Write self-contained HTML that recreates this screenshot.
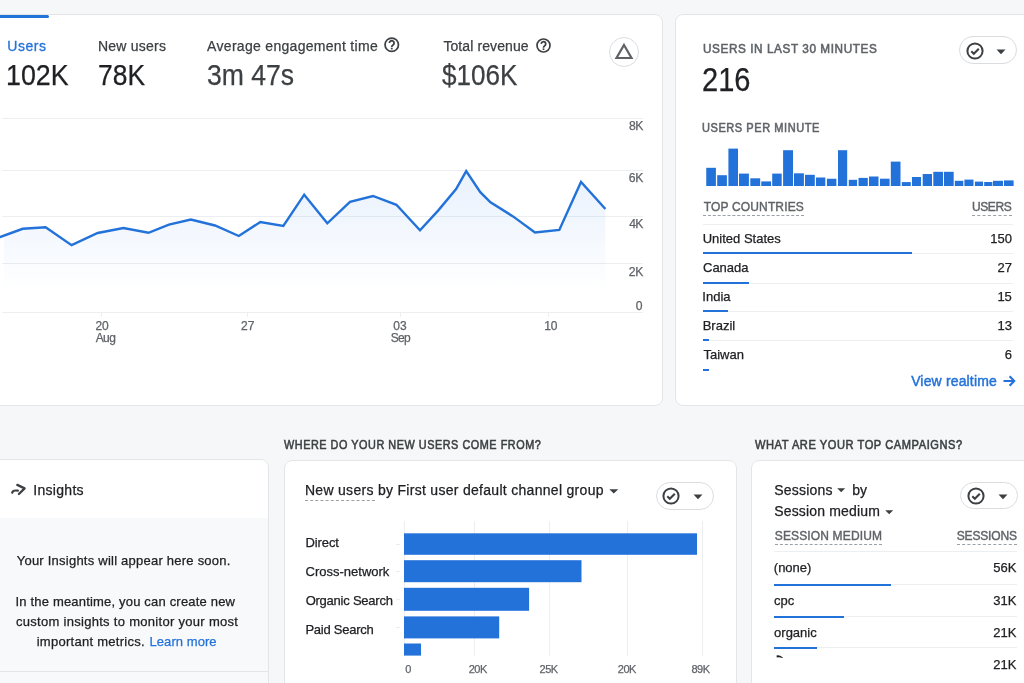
<!DOCTYPE html>
<html><head><meta charset="utf-8"><style>
html,body{margin:0;padding:0}
body{width:1024px;height:683px;overflow:hidden;position:relative;background:#f6f7f9;will-change:transform;font-family:"Liberation Sans",sans-serif}
.t{position:absolute;white-space:nowrap;-webkit-text-stroke-width:0.25px}
.r{position:absolute}
.card{position:absolute;background:#fff;border:1px solid #e3e5e8;border-radius:8px;box-sizing:border-box}
</style></head><body>
<div class="card" style="left:-20px;top:14px;width:683px;height:392px;"></div>
<div class="card" style="left:675px;top:14px;width:380px;height:392px;"></div>
<div class="card" style="left:-20px;top:459px;width:289px;height:260px;background:#f8f9fa;overflow:hidden"><div style="position:absolute;left:0;top:0;right:0;height:58px;background:#fff"></div><div style="position:absolute;left:0;top:211px;right:0;height:1px;background:#e3e5e8"></div></div>
<div class="card" style="left:283.5px;top:459.5px;width:453.2px;height:260px;"></div>
<div class="card" style="left:751px;top:459.5px;width:300px;height:260px;"></div>
<div class="r" style="left:0px;top:14.6px;width:49px;height:3.799999999999999px;background:#2372da;border-radius:0 1.5px 1.5px 0"></div>
<div class="t" id="t0" style="left:7.28px;top:37.60px;font-size:14px;line-height:16px;color:#2372da;letter-spacing:0.519px;-webkit-text-stroke:0.3px #2372da;">Users</div>
<div class="t" id="t1" style="left:6.08px;top:58.20px;font-size:29.5px;line-height:33px;color:#202124;transform:scaleX(0.9088);transform-origin:0 0;">102K</div>
<div class="t" id="t2" style="left:98.01px;top:38.00px;font-size:14px;line-height:16px;color:#3c4043;letter-spacing:0.224px;">New users</div>
<div class="t" id="t3" style="left:97.83px;top:58.00px;font-size:29.5px;line-height:33px;color:#202124;transform:scaleX(0.8955);transform-origin:0 0;">78K</div>
<div class="t" id="t4" style="left:207.11px;top:38.00px;font-size:14px;line-height:16px;color:#3c4043;letter-spacing:0.300px;">Average engagement time</div>
<div class="t" id="t5" style="left:207.16px;top:58.00px;font-size:29.5px;line-height:33px;color:#3c4043;transform:scaleX(0.9008);transform-origin:0 0;">3m 47s</div>
<div class="t" id="t6" style="left:443.38px;top:37.80px;font-size:14px;line-height:16px;color:#3c4043;letter-spacing:0.094px;">Total revenue</div>
<div class="t" id="t7" style="left:442.21px;top:57.80px;font-size:29.5px;line-height:33px;color:#3c4043;transform:scaleX(0.8838);transform-origin:0 0;">$106K</div>
<svg class="r" style="left:384.15px;top:37.15px" width="15.5" height="15.5" viewBox="0 0 24 24"><circle cx="12" cy="12" r="10.4" fill="none" stroke="#3c4043" stroke-width="2.7"/><path d="M8.4 9.4a3.6 3.6 0 1 1 5.6 3c-1.3 0.9-2 1.5-2 3.1" fill="none" stroke="#3c4043" stroke-width="2.8"/><rect x="10.6" y="16.6" width="2.8" height="2.6" fill="#3c4043"/></svg>
<svg class="r" style="left:536.2px;top:37.9px" width="15" height="15" viewBox="0 0 24 24"><circle cx="12" cy="12" r="10.4" fill="none" stroke="#3c4043" stroke-width="2.7"/><path d="M8.4 9.4a3.6 3.6 0 1 1 5.6 3c-1.3 0.9-2 1.5-2 3.1" fill="none" stroke="#3c4043" stroke-width="2.8"/><rect x="10.6" y="16.6" width="2.8" height="2.6" fill="#3c4043"/></svg>
<div class="r" style="left:609px;top:37px;width:28px;height:28px;border:1px solid #dadce0;border-radius:50%"></div>
<svg class="r" style="left:614px;top:42px" width="20" height="20" viewBox="0 0 20 20"><path d="M10 3 L17.5 16 L2.5 16 Z" fill="none" stroke="#5f6368" stroke-width="2.2" stroke-linejoin="miter"/></svg>
<div class="r" style="left:2px;top:118px;width:641px;height:1px;background:#eceef0;"></div>
<div class="r" style="left:2px;top:170px;width:641px;height:1px;background:#eceef0;"></div>
<div class="r" style="left:2px;top:216px;width:641px;height:1px;background:#eceef0;"></div>
<div class="r" style="left:2px;top:263px;width:641px;height:1px;background:#eceef0;"></div>
<div class="r" style="left:2px;top:312px;width:641px;height:1px;background:#eceef0;"></div>
<div class="t" id="t8" style="left:628.94px;top:119.30px;font-size:12.2px;line-height:14px;color:#5f6368;letter-spacing:-0.418px;">8K</div>
<div class="t" id="t9" style="left:628.85px;top:171.00px;font-size:12.2px;line-height:14px;color:#5f6368;letter-spacing:-0.438px;">6K</div>
<div class="t" id="t10" style="left:629.16px;top:217.10px;font-size:12.2px;line-height:14px;color:#5f6368;letter-spacing:-0.633px;">4K</div>
<div class="t" id="t11" style="left:628.86px;top:264.50px;font-size:12.2px;line-height:14px;color:#5f6368;letter-spacing:-0.334px;">2K</div>
<div class="t" id="t12" style="left:635.68px;top:299.20px;font-size:12.2px;line-height:14px;color:#5f6368;">0</div>
<div class="r" style="left:101px;top:313px;width:1px;height:4px;background:#eceef0;"></div>
<div class="r" style="left:247px;top:313px;width:1px;height:4px;background:#eceef0;"></div>
<div class="r" style="left:399.5px;top:313px;width:1.0px;height:4px;background:#eceef0;"></div>
<div class="r" style="left:547.5px;top:313px;width:1.0px;height:4px;background:#eceef0;"></div>
<div class="t" id="t13" style="left:95.41px;top:318.90px;font-size:12px;line-height:14px;color:#5f6368;">20</div>
<div class="t" id="t14" style="left:95.73px;top:330.60px;font-size:12px;line-height:14px;color:#5f6368;letter-spacing:-0.621px;">Aug</div>
<div class="t" id="t15" style="left:241.08px;top:318.70px;font-size:12px;line-height:14px;color:#5f6368;">27</div>
<div class="t" id="t16" style="left:393.36px;top:318.70px;font-size:12px;line-height:14px;color:#5f6368;">03</div>
<div class="t" id="t17" style="left:390.71px;top:330.60px;font-size:12px;line-height:14px;color:#5f6368;letter-spacing:-0.732px;">Sep</div>
<div class="t" id="t18" style="left:544.15px;top:318.70px;font-size:12px;line-height:14px;color:#5f6368;">10</div>
<svg class="r" style="left:0;top:0" width="663" height="406">
<defs><linearGradient id="g1" gradientUnits="userSpaceOnUse" x1="0" y1="190" x2="0" y2="292">
<stop offset="0" stop-color="#1a73e8" stop-opacity="0.085"/><stop offset="1" stop-color="#1a73e8" stop-opacity="0.0"/></linearGradient></defs>
<polygon points="4.0,233.6 4.0,233.6 22.7,228.8 45.6,227.2 71.6,245.2 97.7,233.0 123.4,228.0 148.5,232.8 168.9,224.7 190.8,219.5 215.0,225.5 238.8,236.0 260.3,222.0 283.3,226.0 304.2,194.7 327.3,223.3 350.0,201.9 373.0,196.0 396.4,204.8 420.0,230.3 438.1,210.6 456.1,189.0 466.2,171.1 480.3,192.2 490.5,202.3 513.0,216.4 535.0,232.5 559.3,230.0 581.0,182.0 605.4,209.0 605.4,312 4,312" fill="url(#g1)"/>
<polyline points="-10.0,241.0 0.0,237.0 22.7,228.8 45.6,227.2 71.6,245.2 97.7,233.0 123.4,228.0 148.5,232.8 168.9,224.7 190.8,219.5 215.0,225.5 238.8,236.0 260.3,222.0 283.3,226.0 304.2,194.7 327.3,223.3 350.0,201.9 373.0,196.0 396.4,204.8 420.0,230.3 438.1,210.6 456.1,189.0 466.2,171.1 480.3,192.2 490.5,202.3 513.0,216.4 535.0,232.5 559.3,230.0 581.0,182.0 605.4,209.0" fill="none" stroke="#2372da" stroke-width="2.4" stroke-linejoin="miter"/>
</svg>
<div class="t" id="t19" style="left:702.53px;top:42.00px;font-size:12.2px;line-height:14px;color:#5f6368;transform:scaleX(0.9641);transform-origin:0 0;letter-spacing:0.600px;-webkit-text-stroke:0.55px #5f6368;">USERS IN LAST 30 MINUTES</div>
<div class="t" id="t20" style="left:701.95px;top:59.80px;font-size:34px;line-height:38px;color:#202124;transform:scaleX(0.8541);transform-origin:0 0;">216</div>
<div class="t" id="t21" style="left:702.23px;top:121.00px;font-size:12.2px;line-height:14px;color:#5f6368;transform:scaleX(0.9056);transform-origin:0 0;letter-spacing:0.600px;-webkit-text-stroke:0.55px #5f6368;">USERS PER MINUTE</div>
<div class="r" style="left:959px;top:36.2px;width:55.5px;height:26.099999999999994px;border:1px solid #dadce0;border-radius:16px"></div>
<svg class="r" style="left:966.2px;top:41.7px" width="18" height="18" viewBox="0 0 18 18"><circle cx="9" cy="9" r="7.6" fill="none" stroke="#3c4043" stroke-width="2"/><path d="M5.3 9.3 L7.8 11.7 L12.8 6.7" fill="none" stroke="#3c4043" stroke-width="2.1"/></svg>
<svg class="r" style="left:996px;top:49.099999999999994px" width="10" height="6" viewBox="0 0 10 6"><path d="M0.5 0.5 L9.5 0.5 L5 5.2 Z" fill="#3c4043"/></svg>
<svg class="r" style="left:0;top:0" width="1024" height="200"><rect x="706.25" y="167.80" width="9.65" height="18.20" fill="#2372da"/><rect x="717.20" y="175.20" width="9.70" height="10.80" fill="#2372da"/><rect x="728.40" y="148.60" width="9.60" height="37.40" fill="#2372da"/><rect x="739.00" y="173.60" width="9.90" height="12.40" fill="#2372da"/><rect x="750.30" y="178.30" width="9.90" height="7.70" fill="#2372da"/><rect x="761.25" y="181.40" width="9.85" height="4.60" fill="#2372da"/><rect x="772.20" y="173.60" width="9.50" height="12.40" fill="#2372da"/><rect x="783.10" y="150.20" width="9.90" height="35.80" fill="#2372da"/><rect x="794.00" y="173.30" width="9.90" height="12.70" fill="#2372da"/><rect x="805.00" y="174.80" width="9.80" height="11.20" fill="#2372da"/><rect x="816.00" y="177.50" width="9.30" height="8.50" fill="#2372da"/><rect x="826.90" y="178.75" width="9.50" height="7.25" fill="#2372da"/><rect x="838.00" y="150.20" width="9.20" height="35.80" fill="#2372da"/><rect x="848.75" y="179.80" width="8.35" height="6.20" fill="#2372da"/><rect x="858.50" y="177.90" width="9.30" height="8.10" fill="#2372da"/><rect x="869.00" y="176.50" width="9.50" height="9.50" fill="#2372da"/><rect x="880.00" y="178.70" width="9.60" height="7.30" fill="#2372da"/><rect x="890.80" y="161.60" width="9.70" height="24.40" fill="#2372da"/><rect x="901.80" y="182.10" width="9.00" height="3.90" fill="#2372da"/><rect x="912.00" y="177.00" width="9.00" height="9.00" fill="#2372da"/><rect x="922.70" y="174.00" width="9.30" height="12.00" fill="#2372da"/><rect x="933.30" y="171.80" width="9.70" height="14.20" fill="#2372da"/><rect x="944.00" y="171.80" width="9.70" height="14.20" fill="#2372da"/><rect x="954.80" y="180.80" width="8.50" height="5.20" fill="#2372da"/><rect x="964.40" y="179.60" width="9.10" height="6.40" fill="#2372da"/><rect x="974.90" y="181.60" width="8.10" height="4.40" fill="#2372da"/><rect x="984.20" y="182.00" width="8.20" height="4.00" fill="#2372da"/><rect x="993.00" y="180.80" width="10.00" height="5.20" fill="#2372da"/><rect x="1004.00" y="180.40" width="9.60" height="5.60" fill="#2372da"/></svg>
<div class="t" id="t22" style="left:703.75px;top:200.10px;font-size:12px;line-height:14px;color:#5f6368;letter-spacing:0.154px;-webkit-text-stroke:0.4px #5f6368;">TOP COUNTRIES</div>
<div class="r" style="left:703px;top:215px;width:101px;height:1px;background:transparent;border-top:1px dashed #9aa0a6;height:0"></div>
<div class="t" id="t23" style="left:971.94px;top:200.10px;font-size:12px;line-height:14px;color:#5f6368;letter-spacing:-0.374px;-webkit-text-stroke:0.4px #5f6368;">USERS</div>
<div class="r" style="left:972px;top:215px;width:40px;height:1px;background:transparent;border-top:1px dashed #9aa0a6;height:0"></div>
<div class="r" style="left:703px;top:224px;width:310px;height:1px;background:#eceef0;"></div>
<div class="t" id="t24" style="left:702.70px;top:230.50px;font-size:13px;line-height:15px;color:#202124;">United States</div>
<div class="t" id="t25" style="left:990.27px;top:230.50px;font-size:13px;line-height:15px;color:#202124;">150</div>
<div class="r" style="left:703px;top:253px;width:310px;height:1px;background:#eceef0;"></div>
<div class="r" style="left:703px;top:252px;width:209px;height:2px;background:#2372da;"></div>
<div class="t" id="t26" style="left:703.00px;top:260.20px;font-size:13px;line-height:15px;color:#202124;">Canada</div>
<div class="t" id="t27" style="left:997.55px;top:260.20px;font-size:13px;line-height:15px;color:#202124;">27</div>
<div class="r" style="left:703px;top:283px;width:310px;height:1px;background:#eceef0;"></div>
<div class="r" style="left:703px;top:282px;width:46px;height:2px;background:#2372da;"></div>
<div class="t" id="t28" style="left:702.35px;top:288.80px;font-size:13px;line-height:15px;color:#202124;">India</div>
<div class="t" id="t29" style="left:997.40px;top:288.80px;font-size:13px;line-height:15px;color:#202124;">15</div>
<div class="r" style="left:703px;top:311px;width:310px;height:1px;background:#eceef0;"></div>
<div class="r" style="left:703px;top:310px;width:24.5px;height:2px;background:#2372da;"></div>
<div class="t" id="t30" style="left:702.66px;top:317.80px;font-size:13px;line-height:15px;color:#202124;">Brazil</div>
<div class="t" id="t31" style="left:997.42px;top:317.80px;font-size:13px;line-height:15px;color:#202124;">13</div>
<div class="r" style="left:703px;top:340px;width:310px;height:1px;background:#eceef0;"></div>
<div class="r" style="left:703px;top:339px;width:5.7000000000000455px;height:2px;background:#2372da;"></div>
<div class="t" id="t32" style="left:703.49px;top:346.50px;font-size:13px;line-height:15px;color:#202124;">Taiwan</div>
<div class="t" id="t33" style="left:1004.68px;top:346.50px;font-size:13px;line-height:15px;color:#202124;">6</div>
<div class="r" style="left:703px;top:369px;width:5.7000000000000455px;height:2px;background:#2372da;"></div>
<div class="t" id="t34" style="left:911.13px;top:372.80px;font-size:14px;line-height:16px;color:#2372da;letter-spacing:0.154px;-webkit-text-stroke:0.45px #2372da;">View realtime</div>
<svg class="r" style="left:1001px;top:373px" width="16" height="16" viewBox="0 0 16 16"><path d="M2.5 8 H13.2 M8.6 3.3 L13.2 8 L8.6 12.7" fill="none" stroke="#2372da" stroke-width="2.1"/></svg>
<div class="t" id="t35" style="left:283.70px;top:438.00px;font-size:12.2px;line-height:14px;color:#3c4043;transform:scaleX(0.8903);transform-origin:0 0;letter-spacing:0.600px;-webkit-text-stroke:0.55px #3c4043;">WHERE DO YOUR NEW USERS COME FROM?</div>
<div class="t" id="t36" style="left:754.84px;top:438.00px;font-size:12.2px;line-height:14px;color:#3c4043;transform:scaleX(0.9116);transform-origin:0 0;letter-spacing:0.600px;-webkit-text-stroke:0.55px #3c4043;">WHAT ARE YOUR TOP CAMPAIGNS?</div>
<svg class="r" style="left:6px;top:478px" width="24" height="22" viewBox="0 0 24 22"><path d="M11.3 6.9 L18.6 10.4 L12.9 16" fill="none" stroke="#3c4043" stroke-width="2.3" stroke-linecap="round" stroke-linejoin="round"/><path d="M6.2 14.7 C6.6 12.5 8.6 12.2 11.9 12.7" fill="none" stroke="#3c4043" stroke-width="2.2" stroke-linecap="round"/></svg>
<div class="t" id="t37" style="left:33.23px;top:482.10px;font-size:14px;line-height:16px;color:#202124;letter-spacing:0.303px;">Insights</div>
<div class="t" id="t38" style="left:16.71px;top:553.20px;font-size:13px;line-height:15px;color:#202124;letter-spacing:0.234px;">Your Insights will appear here soon.</div>
<div class="t" id="t39" style="left:15.48px;top:594.40px;font-size:13px;line-height:15px;color:#202124;letter-spacing:0.185px;">In the meantime, you can create new</div>
<div class="t" id="t40" style="left:15.89px;top:614.10px;font-size:13px;line-height:15px;color:#202124;letter-spacing:0.297px;">custom insights to monitor your most</div>
<div class="t" id="t41" style="left:36.70px;top:633.80px;font-size:13px;line-height:15px;color:#202124;letter-spacing:0.276px;">important metrics.</div>
<div class="t" id="t42" style="left:149.51px;top:633.80px;font-size:13px;line-height:15px;color:#2372da;letter-spacing:0.064px;">Learn more</div>
<div class="t" id="t43" style="left:304.94px;top:482.00px;font-size:14px;line-height:16px;color:#202124;letter-spacing:0.295px;">New users by First user default channel group</div>
<div class="r" style="left:305px;top:500px;width:70px;height:1px;background:transparent;border-top:1px dashed #9aa0a6;height:0"></div>
<svg class="r" style="left:609px;top:489px" width="10" height="5" viewBox="0 0 10 5"><path d="M0.3 0.3 L9.3 0.3 L4.8 4.6 Z" fill="#3c4043"/></svg>
<div class="r" style="left:655.9px;top:481.9px;width:56.39999999999998px;height:25.900000000000034px;border:1px solid #dadce0;border-radius:16px"></div>
<svg class="r" style="left:662.3px;top:486.9px" width="18" height="18" viewBox="0 0 18 18"><circle cx="9" cy="9" r="7.6" fill="none" stroke="#3c4043" stroke-width="2"/><path d="M5.3 9.3 L7.8 11.7 L12.8 6.7" fill="none" stroke="#3c4043" stroke-width="2.1"/></svg>
<svg class="r" style="left:693.4px;top:494.3px" width="10" height="6" viewBox="0 0 10 6"><path d="M0.5 0.5 L9.5 0.5 L5 5.2 Z" fill="#3c4043"/></svg>
<div class="r" style="left:404px;top:521px;width:1px;height:135px;background:#eceef0;"></div>
<div class="r" style="left:474px;top:521px;width:1px;height:135px;background:#eceef0;"></div>
<div class="r" style="left:549px;top:521px;width:1px;height:135px;background:#eceef0;"></div>
<div class="r" style="left:627px;top:521px;width:1px;height:135px;background:#eceef0;"></div>
<div class="r" style="left:702px;top:521px;width:1px;height:135px;background:#eceef0;"></div>
<div class="r" style="left:396px;top:543.5px;width:4px;height:1.0px;background:#eceef0;"></div>
<div class="r" style="left:396px;top:571px;width:4px;height:1px;background:#eceef0;"></div>
<div class="r" style="left:396px;top:599px;width:4px;height:1px;background:#eceef0;"></div>
<div class="r" style="left:396px;top:627px;width:4px;height:1px;background:#eceef0;"></div>
<svg class="r" style="left:0;top:0" width="740" height="683"><rect x="404" y="533.3" width="293.0" height="21.5" fill="#2372da"/><rect x="404" y="560.2" width="177.5" height="22.0" fill="#2372da"/><rect x="404" y="587.8" width="125.1" height="23.0" fill="#2372da"/><rect x="404" y="616.4" width="95.2" height="22.0" fill="#2372da"/><rect x="404" y="643.5" width="17.0" height="12.1" fill="#2372da"/></svg>
<div class="t" id="t44" style="left:305.38px;top:534.70px;font-size:13px;line-height:15px;color:#202124;letter-spacing:-0.070px;">Direct</div>
<div class="t" id="t45" style="left:305.55px;top:564.40px;font-size:13px;line-height:15px;color:#202124;">Cross-network</div>
<div class="t" id="t46" style="left:305.67px;top:593.00px;font-size:13px;line-height:15px;color:#202124;letter-spacing:-0.239px;">Organic Search</div>
<div class="t" id="t47" style="left:305.38px;top:621.60px;font-size:13px;line-height:15px;color:#202124;letter-spacing:-0.237px;">Paid Search</div>
<div class="t" id="t48" style="left:405.24px;top:663.40px;font-size:11px;line-height:12px;color:#5f6368;">0</div>
<div class="t" id="t49" style="left:468.72px;top:663.40px;font-size:11px;line-height:12px;color:#5f6368;letter-spacing:-0.465px;">20K</div>
<div class="t" id="t50" style="left:539.44px;top:663.40px;font-size:11px;line-height:12px;color:#5f6368;letter-spacing:-0.419px;">25K</div>
<div class="t" id="t51" style="left:617.76px;top:663.40px;font-size:11px;line-height:12px;color:#5f6368;letter-spacing:-0.434px;">20K</div>
<div class="t" id="t52" style="left:691.40px;top:663.40px;font-size:11px;line-height:12px;color:#5f6368;letter-spacing:-0.487px;">89K</div>
<div class="t" id="t53" style="left:774.19px;top:481.70px;font-size:14px;line-height:16px;color:#202124;letter-spacing:0.231px;">Sessions</div>
<svg class="r" style="left:837px;top:487.5px" width="9" height="5" viewBox="0 0 9 5"><path d="M0.2 0.2 L8.2 0.2 L4.2 4.2 Z" fill="#3c4043"/></svg>
<div class="t" id="t54" style="left:852.24px;top:481.70px;font-size:14px;line-height:16px;color:#202124;letter-spacing:0.032px;">by</div>
<div class="t" id="t55" style="left:774.19px;top:502.60px;font-size:14px;line-height:16px;color:#202124;letter-spacing:0.174px;">Session medium</div>
<svg class="r" style="left:885px;top:509.5px" width="9" height="5" viewBox="0 0 9 5"><path d="M0.2 0.2 L8.2 0.2 L4.2 4.2 Z" fill="#3c4043"/></svg>
<div class="r" style="left:960.3px;top:481.7px;width:55.60000000000002px;height:25.30000000000001px;border:1px solid #dadce0;border-radius:16px"></div>
<svg class="r" style="left:967.4px;top:486.6px" width="18" height="18" viewBox="0 0 18 18"><circle cx="9" cy="9" r="7.6" fill="none" stroke="#3c4043" stroke-width="2"/><path d="M5.3 9.3 L7.8 11.7 L12.8 6.7" fill="none" stroke="#3c4043" stroke-width="2.1"/></svg>
<svg class="r" style="left:997.5px;top:494.0px" width="10" height="6" viewBox="0 0 10 6"><path d="M0.5 0.5 L9.5 0.5 L5 5.2 Z" fill="#3c4043"/></svg>
<div class="t" id="t56" style="left:774.78px;top:529.00px;font-size:12px;line-height:14px;color:#5f6368;letter-spacing:0.146px;-webkit-text-stroke:0.4px #5f6368;">SESSION MEDIUM</div>
<div class="r" style="left:774.6px;top:544px;width:107.10000000000002px;height:1px;background:transparent;border-top:1px dashed #9aa0a6;height:0"></div>
<div class="t" id="t57" style="left:956.73px;top:529.00px;font-size:12px;line-height:14px;color:#5f6368;letter-spacing:-0.170px;-webkit-text-stroke:0.4px #5f6368;">SESSIONS</div>
<div class="r" style="left:956.8px;top:544px;width:60.30000000000007px;height:1px;background:transparent;border-top:1px dashed #9aa0a6;height:0"></div>
<div class="r" style="left:774px;top:551px;width:243px;height:1px;background:#eceef0;"></div>
<div class="t" id="t58" style="left:773.82px;top:559.90px;font-size:13px;line-height:15px;color:#202124;">(none)</div>
<div class="t" id="t59" style="left:993.19px;top:559.90px;font-size:13px;line-height:15px;color:#202124;">56K</div>
<div class="r" style="left:774px;top:584.1px;width:243px;height:1.0px;background:#eceef0;"></div>
<div class="r" style="left:774px;top:583.6px;width:116.70000000000005px;height:2.0px;background:#2372da;"></div>
<div class="t" id="t60" style="left:774.07px;top:592.90px;font-size:13px;line-height:15px;color:#202124;">cpc</div>
<div class="t" id="t61" style="left:993.35px;top:592.90px;font-size:13px;line-height:15px;color:#202124;">31K</div>
<div class="r" style="left:774px;top:616.2px;width:243px;height:1.0px;background:#eceef0;"></div>
<div class="r" style="left:774px;top:615.7px;width:69.79999999999995px;height:2.0px;background:#2372da;"></div>
<div class="t" id="t62" style="left:774.08px;top:625.10px;font-size:13px;line-height:15px;color:#202124;">organic</div>
<div class="t" id="t63" style="left:993.35px;top:625.10px;font-size:13px;line-height:15px;color:#202124;">21K</div>
<div class="r" style="left:774px;top:647.2px;width:243px;height:1.0px;background:#eceef0;"></div>
<div class="r" style="left:774px;top:646.7px;width:42.700000000000045px;height:2.0px;background:#2372da;"></div>
<div class="t" id="t64" style="left:993.35px;top:657.10px;font-size:13px;line-height:15px;color:#202124;">21K</div>
<svg class="r" style="left:776px;top:654px" width="8" height="5" viewBox="0 0 8 5"><path d="M0.5 1.5 Q3 0.5 7 3.5 L6.5 4 Q3 2.8 0.8 3.5 Z" fill="#202124"/></svg>
</body></html>
